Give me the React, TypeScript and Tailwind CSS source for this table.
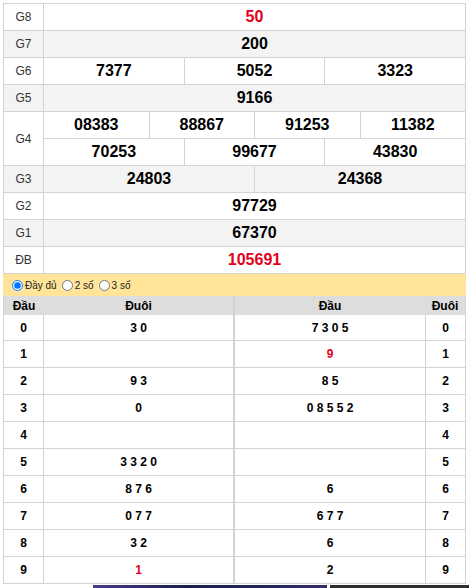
import React from 'react';

const font = { fontFamily: '"Liberation Sans", Arial, sans-serif' };

type Prize = { label: string; rows: string[][]; red?: boolean };

const prizes: Prize[] = [
  { label: 'G8', rows: [['50']], red: true },
  { label: 'G7', rows: [['200']] },
  { label: 'G6', rows: [['7377', '5052', '3323']] },
  { label: 'G5', rows: [['9166']] },
  { label: 'G4', rows: [['08383', '88867', '91253', '11382'], ['70253', '99677', '43830']] },
  { label: 'G3', rows: [['24803', '24368']] },
  { label: 'G2', rows: [['97729']] },
  { label: 'G1', rows: [['67370']] },
  { label: 'ĐB', rows: [['105691']], red: true },
];

// [đầu, đuôi list] left side, [đầu list, đuôi] right side
const loto: { n: string; tails: string; tailsRed?: boolean; heads: string; headsRed?: boolean }[] = [
  { n: '0', tails: '3 0', heads: '7 3 0 5' },
  { n: '1', tails: '', heads: '9', headsRed: true },
  { n: '2', tails: '9 3', heads: '8 5' },
  { n: '3', tails: '0', heads: '0 8 5 5 2' },
  { n: '4', tails: '', heads: '' },
  { n: '5', tails: '3 3 2 0', heads: '' },
  { n: '6', tails: '8 7 6', heads: '6' },
  { n: '7', tails: '0 7 7', heads: '6 7 7' },
  { n: '8', tails: '3 2', heads: '6' },
  { n: '9', tails: '1', tailsRed: true, heads: '2' },
];

function PrizeRow({ p, i }: { p: Prize; i: number }) {
  const bg = i % 2 === 1 ? 'bg-[#f3f3f3]' : 'bg-white';
  return (
    <div className={`flex ${bg}`}>
      <div className="w-[40px] flex items-center justify-center border-r border-b border-[#d3d3d3] text-[12px] text-[#333]">
        {p.label}
      </div>
      <div className="flex-1 flex flex-col">
        {p.rows.map((r, ri) => (
          <div key={ri} className="flex h-[27px]">
            {r.map((v, vi) => (
              <div
                key={vi}
                className={`flex-1 flex items-center justify-center border-r border-b border-[#d3d3d3] text-[16px] font-bold ${
                  p.red ? 'text-[#e3001b]' : 'text-black'
                }`}
              >
                {v}
              </div>
            ))}
          </div>
        ))}
      </div>
    </div>
  );
}

function Radio({ checked, label }: { checked?: boolean; label: string }) {
  return (
    <label className="flex items-center gap-[2px] text-[10px] text-[#222]">
      <input type="radio" name="mode" defaultChecked={checked} className="m-0 w-[11px] h-[11px]" />
      <span>{label}</span>
    </label>
  );
}

export default function App() {
  return (
    <div className="w-[469px] h-[588px] overflow-hidden bg-white" style={font}>
      <div className="ml-[3px] mt-[3px] w-[463px] border-l border-t border-[#d3d3d3]">
        {prizes.map((p, i) => (
          <PrizeRow key={p.label} p={p} i={i} />
        ))}
      </div>

      {/* chọn kiểu hiển thị */}
      <div className="ml-[3px] w-[463px] h-[22px] bg-[#ffe49a] flex items-center gap-[5px] pl-[9px]">
        <Radio checked label="Đầy đủ" />
        <Radio label="2 số" />
        <Radio label="3 số" />
      </div>

      {/* bảng loto */}
      <div className="ml-[3px] w-[463px] flex">
        {[0, 1].map((side) => (
          <div key={side} className="w-[231px] flex flex-col border-l border-[#d3d3d3] last:w-[232px]">
            <div className="flex h-[19px] bg-[#dddddd] border-r border-[#d3d3d3] text-[12px] font-bold text-black">
              {side === 0 ? (
                <>
                  <div className="w-[40px] flex items-center justify-center">Đầu</div>
                  <div className="flex-1 flex items-center justify-center">Đuôi</div>
                </>
              ) : (
                <>
                  <div className="flex-1 flex items-center justify-center">Đầu</div>
                  <div className="w-[40px] flex items-center justify-center">Đuôi</div>
                </>
              )}
            </div>
            {loto.map((r, ri) => (
              <div key={r.n} className={`flex ${ri === 0 ? 'h-[26px]' : 'h-[27px]'} text-[12px] font-bold`}>
                {side === 0 ? (
                  <>
                    <div className="w-[40px] flex items-center justify-center border-r border-b border-[#d3d3d3]">
                      {r.n}
                    </div>
                    <div
                      className={`flex-1 flex items-center justify-center border-r border-b border-[#d3d3d3] ${
                        r.tailsRed ? 'text-[#e3001b]' : 'text-black'
                      }`}
                    >
                      {r.tails}
                    </div>
                  </>
                ) : (
                  <>
                    <div
                      className={`flex-1 flex items-center justify-center border-r border-b border-[#d3d3d3] ${
                        r.headsRed ? 'text-[#e3001b]' : 'text-black'
                      }`}
                    >
                      {r.heads}
                    </div>
                    <div className="w-[40px] flex items-center justify-center border-r border-b border-[#d3d3d3]">
                      {r.n}
                    </div>
                  </>
                )}
              </div>
            ))}
          </div>
        ))}
      </div>

      {/* quảng cáo phía dưới */}
      <div className="flex mt-[1px] h-[6px]">
        <div className="w-[93px]" />
        <div className="w-[234px] bg-[linear-gradient(90deg,#4a3c8c,#1c1f4a_40%,#262a5c_80%,#3b2d6a)]" />
        <div className="w-[3px]" />
        <div className="flex-1 bg-[#2f2f2f]" />
      </div>
    </div>
  );
}
